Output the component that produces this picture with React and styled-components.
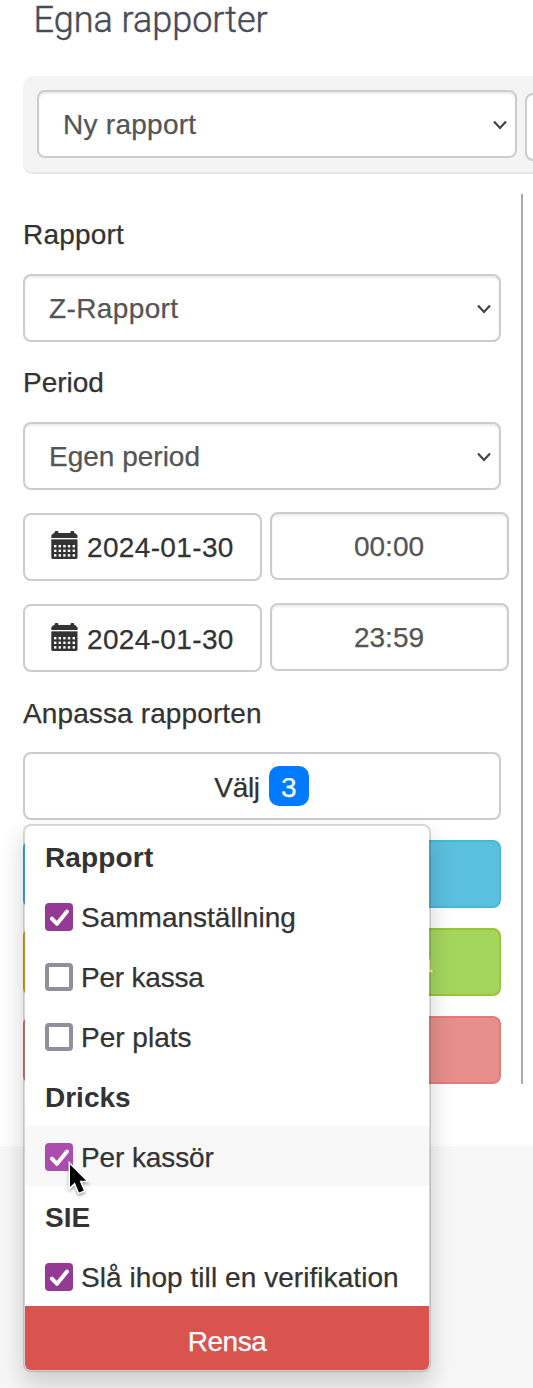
import React from 'react'
import styled, { createGlobalStyle } from 'styled-components'

const adjustGroups = [
    {
        title: 'Rapport',
        spacing: 0.15,
        options: [
            { text: 'Sammanställning', checked: true },
            { text: 'Per kassa', spacing: -0.2 },
            { text: 'Per plats' },
        ],
    },
    {
        title: 'Dricks',
        options: [{ text: 'Per kassör', spacing: -0.1, checked: true, hover: true }],
    },
    {
        title: 'SIE',
        options: [{ text: 'Slå ihop till en verifikation', spacing: 0.06, checked: true }],
    },
]

const periodRows = [
    { date: '2024-01-30', time: '00:00' },
    { date: '2024-01-30', time: '23:59', nudge: 1 },
]

const CalendarIcon = () => (
    <CalendarSvg viewBox="0 0 27 28">
        <path fill="#333" d="M0.3 6.9V4.2L2.5 2.2L3.6 2V1.2Q3.6 0 4.8 0H6.2Q7.4 0 7.4 1.2V2H19.4V1.2Q19.4 0 20.6 0H22Q23.2 0 23.2 1.2V2L24.3 2.2L26.5 4.2V6.9Z" />
        <path fill="#777" d="M0.3 8H26.5V9H0.3Z" />
        <path fill="#333" d="M0.3 9H26.5V26.6Q26.5 28 25 28H1.8Q0.3 28 0.3 26.6Z" />
        {[14, 18.6, 23.2].map(y =>
            [3, 7.6, 12.2, 16.8, 21.6].map(x => (
                <rect key={`${x}-${y}`} x={x} y={y} width="2.4" height="2.4" fill="#fff" />
            ))
        )}
    </CalendarSvg>
)

const Chevron = () => (
    <ChevronSvg viewBox="0 0 14 10">
        <path d="M1 1.5L7 8L13 1.5" fill="none" stroke="#444" strokeWidth="2.2" />
    </ChevronSvg>
)

const Check = ({ checked, hover }) => (
    <Checkbox $checked={checked} $hover={hover}>
        {checked && (
            <svg width="28" height="28" viewBox="0 0 28 28">
                <path
                    d="M6.9 14.6L12 19.8L22 7.6"
                    fill="none"
                    stroke="#fff"
                    strokeWidth="4"
                    strokeLinecap="round"
                    strokeLinejoin="round"
                />
            </svg>
        )}
    </Checkbox>
)

const Pointer = () => (
    <PointerSvg viewBox="0 0 26 38">
        <path
            d="M4 4.5V27L8.8 22.6L13 32.4L17.8 30.4L13.6 20.8H20.2Z"
            fill="#000"
            stroke="#fff"
            strokeWidth="3"
            paintOrder="stroke"
        />
    </PointerSvg>
)

const SelectBox = ({ text, width, spacing }) => (
    <Select $width={width}>
        <Text $spacing={spacing}>{text}</Text>
        <Chevron />
    </Select>
)

const AdjustMenu = () => (
    <Menu>
        {adjustGroups.map(group => (
            <React.Fragment key={group.title}>
                <MenuHeader>
                    <Text $spacing={group.spacing}>{group.title}</Text>
                </MenuHeader>
                {group.options.map(option => (
                    <MenuItem key={option.text} $hover={option.hover}>
                        <Check checked={option.checked} hover={option.hover} />
                        <Text $spacing={option.spacing}>{option.text}</Text>
                        {option.hover && <Pointer />}
                    </MenuItem>
                ))}
            </React.Fragment>
        ))}
        <ClearButton>
            <Text $spacing={-0.45}>Rensa</Text>
        </ClearButton>
    </Menu>
)

const App = () => {
    return (
        <>
            <GlobalStyle />
            <Page>
                <Title>Egna rapporter</Title>

                <Toolbar>
                    <SelectBox text="Ny rapport" width={480} spacing={0.27} />
                    <ToolbarButton />
                </Toolbar>

                <Sidebar>
                    <Label>
                        <Text $spacing={0.2}>Rapport</Text>
                    </Label>
                    <SelectBox text="Z-Rapport" spacing={0.38} />

                    <Label>Period</Label>
                    <SelectBox text="Egen period" />

                    <PeriodRows>
                        {periodRows.map(row => (
                            <PeriodRow key={row.time}>
                                <DateButton $nudge={row.nudge}>
                                    <CalendarIcon />
                                    <Text $spacing={0.35}>{row.date}</Text>
                                </DateButton>
                                <TimeInput>{row.time}</TimeInput>
                            </PeriodRow>
                        ))}
                    </PeriodRows>

                    <Label $tight>
                        <Text $spacing={0.12}>Anpassa rapporten</Text>
                    </Label>
                    <Dropdown>
                        <DropdownButton>
                            <Text $spacing={-0.3}>Välj</Text>
                            <Badge>3</Badge>
                        </DropdownButton>
                        <AdjustMenu />
                    </Dropdown>

                    <Actions>
                        <ActionRow>
                            <Action $bg="#5bc0de" $border="#46b8da" />
                        </ActionRow>
                        <ActionRow>
                            <Action $bg="#f0ad4e" $border="#eea236" />
                            <Action $bg="#a4d65e" $border="#99c43b">Spara</Action>
                        </ActionRow>
                        <ActionRow>
                            <Action $bg="#e68f8c" $border="#e27c79" />
                        </ActionRow>
                    </Actions>
                </Sidebar>
            </Page>
        </>
    )
}

export default App

const GlobalStyle = createGlobalStyle`
    * {
        box-sizing: border-box;
    }

    body {
        margin: 0;
        height: 1388px;
        overflow: hidden;
        background: #f7f7f7;
        color: #333;
        font: 28px/40px "Liberation Sans", Arial, sans-serif;
        -webkit-text-stroke: 0.25px;
    }
`

const Page = styled.div`
    height: 1146px;
    padding-left: 23px;
    background: #fff;
`

const Title = styled.h1`
    height: 76px;
    margin: 0;
    padding-left: 10.5px;
    color: #474b58;
    font: 300 36px/40px Roboto, sans-serif;
    -webkit-text-stroke: 0.45px;
    white-space: nowrap;
`

const Toolbar = styled.div`
    display: flex;
    gap: 8px;
    height: 98px;
    padding: 14px;
    border-bottom: 2px solid #e5e5e5;
    border-radius: 10px 0 0 10px;
    background: #f4f4f4;
    overflow: hidden;
`

const Field = styled.div`
    display: flex;
    align-items: center;
    height: 68px;
    padding-top: 2px;
    border: 2px solid #ccc;
    border-radius: 8px;
    background: #fff;
    white-space: nowrap;
`

const Select = styled(Field)`
    flex: none;
    justify-content: space-between;
    width: ${props => (props.$width ? `${props.$width}px` : '100%')};
    padding: 2px 8px 0 24px;
    color: #555;
    box-shadow: inset 0 2px 2px rgba(0, 0, 0, 0.075);
`

const ToolbarButton = styled(Field)`
    flex: none;
    width: 60px;
    margin-top: 3px;
`

const Text = styled.span`
    letter-spacing: ${props => props.$spacing || 0}px;
`

const ChevronSvg = styled.svg`
    width: 14px;
    height: 10px;
`

const Sidebar = styled.div`
    width: 500px;
    height: 890px;
    margin-top: 20px;
    padding-right: 20px;
    border-right: 2px solid #aaa;
`

const Label = styled.div`
    padding: ${props => (props.$tight ? '23px 0 18px' : '21px 0 19px')};
`

const PeriodRows = styled.div`
    display: grid;
    gap: 23px;
    width: 486px;
    margin-top: 22px;
`

const PeriodRow = styled.div`
    display: grid;
    grid-template-columns: 239px 239px;
    gap: 8px;
`

const DateButton = styled(Field)`
    gap: 9px;
    margin-top: 1px;
    margin-bottom: -1px;
    padding: ${props => 2 + (props.$nudge || 0) * 2}px 0 0 26px;
`

const TimeInput = styled(Field)`
    justify-content: center;
    padding-right: 1px;
    color: #555;
    box-shadow: inset 0 2px 2px rgba(0, 0, 0, 0.075);
`

const CalendarSvg = styled.svg`
    width: 27px;
    height: 28px;
    margin-bottom: 6px;
`

const Dropdown = styled.div`
    position: relative;
`

const DropdownButton = styled(Field)`
    gap: 9px;
    justify-content: center;
    padding: 4px 1px 0 0;
`

const Badge = styled.span`
    width: 40px;
    height: 40px;
    margin-bottom: 4px;
    padding-top: 2px;
    border-radius: 10px;
    background: #007bff;
    color: #fff;
    text-align: center;
`

const Menu = styled.div`
    position: absolute;
    z-index: 1;
    top: 72px;
    left: 0;
    width: 408px;
    height: 548px;
    border: 2px solid rgba(0, 0, 0, 0.15);
    border-radius: 8px;
    background: #fff;
    background-clip: padding-box;
    box-shadow: 0 12px 24px rgba(0, 0, 0, 0.175);
`

const MenuHeader = styled.div`
    height: 60px;
    padding: 12px 20px 0;
    font-weight: bold;
    -webkit-text-stroke: 0;
`

const MenuItem = styled.div`
    position: relative;
    display: flex;
    gap: 8px;
    align-items: center;
    height: 60px;
    padding: 4px 20px 0;
    background: ${props => (props.$hover ? '#f8f8f8' : 'transparent')};
    white-space: nowrap;
`

const Checkbox = styled.span`
    display: block;
    width: 28px;
    height: 28px;
    margin-bottom: 2px;
    border: ${props => (props.$checked ? 0 : '4px solid #8f8f9d')};
    border-radius: 4px;
    background: ${props => (props.$checked ? (props.$hover ? '#ab4dae' : '#943a94') : '#fff')};
`

const PointerSvg = styled.svg`
    position: absolute;
    top: 34px;
    left: 41px;
    width: 26px;
    height: 38px;
    filter: drop-shadow(0 2px 1.5px rgba(0, 0, 0, 0.35));
    z-index: 1;
`

const ClearButton = styled.div`
    height: 64px;
    padding-top: 16px;
    border-radius: 0 0 6px 6px;
    background: #d9534f;
    color: #fff;
    text-align: center;
`

const Actions = styled.div`
    display: grid;
    gap: 20px;
    margin-top: 20px;
`

const ActionRow = styled.div`
    display: flex;
    gap: 8px;
`

const Action = styled.div`
    flex: 1 1 0;
    height: 68px;
    padding: 13px 67px 0 0;
    border: 2px solid ${props => props.$border};
    border-radius: 8px;
    background: ${props => props.$bg};
    color: #fff;
    text-align: right;
`
